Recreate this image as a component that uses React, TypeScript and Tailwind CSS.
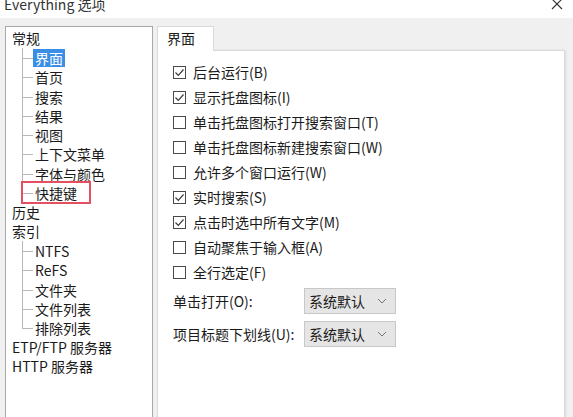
import React from 'react';

const font = { fontFamily: '"Noto Sans CJK SC", "Noto Sans", sans-serif' };

type Node = { label: string; depth: 0 | 1; last?: boolean; selected?: boolean; marked?: boolean };

const tree: Node[] = [
  { label: '常规', depth: 0 },
  { label: '界面', depth: 1, selected: true },
  { label: '首页', depth: 1 },
  { label: '搜索', depth: 1 },
  { label: '结果', depth: 1 },
  { label: '视图', depth: 1 },
  { label: '上下文菜单', depth: 1 },
  { label: '字体与颜色', depth: 1 },
  { label: '快捷键', depth: 1, last: true, marked: true },
  { label: '历史', depth: 0 },
  { label: '索引', depth: 0 },
  { label: 'NTFS', depth: 1 },
  { label: 'ReFS', depth: 1 },
  { label: '文件夹', depth: 1 },
  { label: '文件列表', depth: 1 },
  { label: '排除列表', depth: 1, last: true },
  { label: 'ETP/FTP 服务器', depth: 0 },
  { label: 'HTTP 服务器', depth: 0 },
];

const options = [
  { label: '后台运行(B)', checked: true },
  { label: '显示托盘图标(I)', checked: true },
  { label: '单击托盘图标打开搜索窗口(T)', checked: false },
  { label: '单击托盘图标新建搜索窗口(W)', checked: false },
  { label: '允许多个窗口运行(W)', checked: false },
  { label: '实时搜索(S)', checked: true },
  { label: '点击时选中所有文字(M)', checked: true },
  { label: '自动聚焦于输入框(A)', checked: false },
  { label: '全行选定(F)', checked: false },
];

const TreeRow = ({ node }: { node: Node }) => {
  if (node.depth === 0) {
    return <div className="h-[19.3px] leading-[19.3px] pl-[6px] text-[14px] text-[#1a1a1a] whitespace-nowrap">{node.label}</div>;
  }
  return (
    <div className="relative h-[19.3px] pl-[27px] text-[14px] text-[#1a1a1a] whitespace-nowrap flex items-center">
      {/* connector lines */}
      <span className={`absolute left-[16px] top-0 w-px bg-[#b8b8b8] ${node.last ? 'h-1/2' : 'h-full'}`} />
      <span className="absolute left-[16px] top-1/2 w-[11px] h-px bg-[#b8b8b8]" />
      <span
        className={`relative px-[2px] leading-[18px] ${
          node.selected ? 'bg-[#3a8ee6] text-white' : ''
        }`}
      >
        {node.label}
        {node.marked && (
          <span className="absolute -left-[12px] -top-[3px] w-[70px] h-[23px] border-2 border-[#e4505f]" />
        )}
      </span>
    </div>
  );
};

const Checkbox = ({ checked }: { checked: boolean }) => (
  <span className="w-[13px] h-[13px] border border-[#4a4a4a] bg-white flex items-center justify-center shrink-0">
    {checked && (
      <svg width="11" height="11" viewBox="0 0 11 11">
        <path d="M1.5 5.5 L4.3 8.3 L9.5 2.5" fill="none" stroke="#3c3c3c" strokeWidth="1.2" />
      </svg>
    )}
  </span>
);

const Combo = () => (
  <div className="w-[92px] h-[26px] bg-[#e5e5e5] border border-[#c8c8c8] flex items-center justify-between pl-[4px] pr-[8px] text-[14px] text-[#1a1a1a]">
    <span>系统默认</span>
    <svg width="10" height="6" viewBox="0 0 10 6">
      <path d="M1 1 L5 5 L9 1" fill="none" stroke="#777" strokeWidth="1" />
    </svg>
  </div>
);

export default function App() {
  return (
    <div className="w-[573px] h-[417px] overflow-hidden bg-[#f0f0f0] flex flex-col" style={font}>
      {/* title bar */}
      <div className="h-[18px] bg-white flex justify-between overflow-hidden shrink-0">
        <span className="pl-[4px] -mt-[6px] text-[14px] leading-[20px] text-[#333]">Everything 选项</span>
        <svg className="mr-[10px] -mt-[2px]" width="12" height="12" viewBox="0 0 12 12">
          <path d="M1 1 L11 11 M11 1 L1 11" stroke="#333" strokeWidth="1.1" />
        </svg>
      </div>

      <div className="flex flex-1 pl-[5px] pt-[8px] gap-[4px]">
        {/* tree */}
        <div className="w-[148px] h-[420px] bg-white border border-[#a8a8a8] shrink-0 pt-[2px]">
          {tree.map((n) => (
            <TreeRow key={n.label} node={n} />
          ))}
        </div>

        {/* tabs */}
        <div className="w-[408px] flex flex-col">
          <div className="flex">
            <div className="w-[57px] h-[25px] bg-white border border-b-0 border-[#d9d9d9] pl-[9px] leading-[23px] text-[14px] text-[#1a1a1a] relative z-10 -mb-px">
              界面
            </div>
          </div>
          <div className="h-[380px] bg-white border border-[#d9d9d9] pt-[9px] pl-[15px] shadow-[1px_0_2px_rgba(0,0,0,0.08)]">
            {options.map((o) => (
              <div key={o.label} className="h-[25px] flex items-center gap-[7px] text-[14px] text-[#1a1a1a]">
                <Checkbox checked={o.checked} />
                <span className="whitespace-nowrap">{o.label}</span>
              </div>
            ))}
            <div className="grid grid-cols-[131px_92px] gap-y-[7px] items-center mt-[3px] text-[14px] text-[#1a1a1a]">
              <span>单击打开(O):</span>
              <Combo />
              <span className="whitespace-nowrap">项目标题下划线(U):</span>
              <Combo />
            </div>
          </div>
        </div>
      </div>
    </div>
  );
}
